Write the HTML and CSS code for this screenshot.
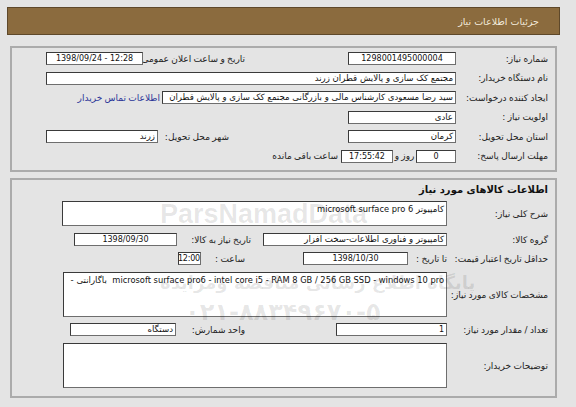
FILE: index.html
```html
<!DOCTYPE html>
<html lang="fa" dir="rtl">
<head>
<meta charset="utf-8">
<link rel="stylesheet" href="styles.css">
</head>
<body>
<div class="page">
  <div class="header">جزئیات اطلاعات نیاز</div>

  <div class="panel p1">
    <div class="row">
      <div class="lbl">شماره نیاز:</div>
      <div class="box c w108">1298001495000004</div>
      <div class="lbl2 r1">تاریخ و ساعت اعلان عمومی:</div>
      <div class="box c w97" dir="ltr">1398/09/24 - 12:28</div>
    </div>
    <div class="row">
      <div class="lbl">نام دستگاه خریدار:</div>
      <div class="box fa w410">مجتمع کک سازی و پالایش قطران زرند</div>
    </div>
    <div class="row">
      <div class="lbl">ایجاد کننده درخواست:</div>
      <div class="box fa w294">سید رضا مسعودی کارشناس مالی و بازرگانی مجتمع کک سازی و پالایش قطران</div>
      <a class="link">اطلاعات تماس خریدار</a>
    </div>
    <div class="row">
      <div class="lbl">اولویت نیاز :</div>
      <div class="box fa w108">عادی</div>
    </div>
    <div class="row">
      <div class="lbl">استان محل تحویل:</div>
      <div class="box fa w108">کرمان</div>
      <div class="lbl2 r5">شهر محل تحویل:</div>
      <div class="box fa w112">زرند</div>
    </div>
    <div class="row">
      <div class="lbl">مهلت ارسال پاسخ:</div>
      <div class="box c w40">0</div>
      <div class="txt day">روز و</div>
      <div class="box c w52">17:55:42</div>
      <div class="txt rem">ساعت باقی مانده</div>
    </div>
  </div>

  <div class="panel p2">
    <div class="title">اطلاعات کالاهای مورد نیاز</div>
    <div class="row2 desc">
      <div class="lbl wide">شرح کلی نیاز:</div>
      <div class="box fa tall w385">کامپیوتر <span class="en">microsoft surface pro 6</span></div>
    </div>
    <div class="row2 grp">
      <div class="lbl wide">گروه کالا:</div>
      <div class="box fa w184">کامپیوتر و فناوری اطلاعات-سخت افزار</div>
      <div class="lbl2 g2">تاریخ نیاز به کالا:</div>
      <div class="box c w103">1398/09/30</div>
    </div>
    <div class="row2 valid">
      <div class="lbl wide">حداقل تاریخ اعتبار قیمت:</div>
      <div class="lbl2 until">تا تاریخ :</div>
      <div class="box c w105">1398/10/30</div>
      <div class="lbl2 hour">ساعت :</div>
      <div class="box c w23">12:00</div>
    </div>
    <div class="row2 spec">
      <div class="lbl wide">مشخصات کالای مورد نیاز:</div>
      <div class="box fa area w384"><span class="en">microsoft surface pro6 - intel core i5 - RAM 8 GB / 256 GB SSD - windows 10 pro</span>&nbsp; باگارانتی -</div>
    </div>
    <div class="row2 qty">
      <div class="lbl wide">تعداد / مقدار مورد نیاز:</div>
      <div class="box w111">1</div>
      <div class="lbl2 unit">واحد شمارش:</div>
      <div class="box fa w106">دستگاه</div>
    </div>
    <div class="row2 note">
      <div class="lbl wide">توضیحات خریدار:</div>
      <div class="box area w384"></div>
    </div>
  </div>
</div>

<div class="wm wm-en">ParsNamadData</div>
<div class="wm wm-fa">پایگاه اطلاع رسانی مناقصه ومزایده</div>
<div class="wm wm-tel">۰۲۱-۸۸۳۴۹۶۷۰-۵</div>
</body>
</html>
```

FILE: styles.css
```css
* { box-sizing: border-box; }

body {
  margin: 0;
  background: #e4e4e4;
  font-family: "DejaVu Sans", sans-serif;
  font-size: 9px;
  word-spacing: -0.5px;
  color: #222;
  direction: rtl;
}

.page {
  width: 553px;
  margin: 7px 16px 0 7px;
}

.header {
  height: 28px;
  background: #8b6b3e;
  border: 1px solid #5e482a;
  color: #f2eadb;
  display: flex;
  align-items: center;
  padding-right: 20px;
  font-size: 9.5px;
  word-spacing: 0;
}

.panel {
  margin: 0 3px;
  border: 2px solid #ababab;
  padding-right: 7px;
}

.p1 {
  margin-top: 11px;
  height: 126px;
  padding-top: 1px;
}

.p2 {
  margin-top: 6px;
  height: 220px;
}

.row {
  display: flex;
  align-items: center;
  height: 19.5px;
}

.row2 {
  display: flex;
  align-items: center;
}

.lbl {
  width: 92px;
  flex: none;
  white-space: nowrap;
}

.lbl.wide { width: 101px; }

.lbl2 {
  flex: none;
  white-space: nowrap;
}

.r1 { margin-right: 103px; width: 102px; }
.r5 { margin-right: 119px; width: 71px; }

.box {
  flex: none;
  height: 13px;
  line-height: 11px;
  background: #fff;
  border: 1px solid #6e6e6e;
  border-top-color: #3a3a3a;
  border-left-color: #3a3a3a;
  padding: 0 2px;
  white-space: nowrap;
  overflow: hidden;
  text-align: right;
  color: #111;
  font-size: 8px;
  word-spacing: 0;
}

.box.fa { font-size: 8.6px; }

.en { font-size: 8.3px; }

.box.c { text-align: center; }

.w23 { width: 23px; padding: 0; letter-spacing: -0.2px; }
.w40 { width: 40px; }
.w52 { width: 52px; }
.w97 { width: 97px; }
.w103 { width: 103px; }
.w105 { width: 105px; }
.w106 { width: 106px; }
.w108 { width: 108px; }
.w111 { width: 111px; }
.w112 { width: 112px; }
.w184 { width: 184px; }
.w294 { width: 294px; }
.w384 { width: 384px; }
.w385 { width: 385px; }
.w410 { width: 410px; }

.box.tall {
  height: 25px;
  padding-top: 1px;
  line-height: 12px;
}

.box.area {
  height: 45px;
  padding: 1px 2px 0;
  line-height: 12px;
}

.link {
  color: #2b3598;
  margin-right: 2px;
  white-space: nowrap;
}

.txt { white-space: nowrap; }
.day { width: 23px; text-align: center; }
.rem { margin-right: 3px; }

.title {
  height: 20px;
  line-height: 20px;
  font-weight: bold;
  font-size: 10px;
  word-spacing: 0;
  color: #111;
}

.desc { margin-top: 1px; height: 25px; }
.grp { margin-top: 7px; height: 13px; }
.g2 { margin-right: 12px; width: 74px; }
.valid { margin-top: 6px; height: 13px; }
.until { width: 39px; }
.hour { margin-right: 58px; width: 44px; }
.spec { margin-top: 7px; height: 45px; }
.qty { margin-top: 6px; height: 13px; }
.unit { margin-right: 91px; width: 69px; }
.note { margin-top: 7px; height: 45px; }

.wm {
  position: absolute;
  color: rgba(0, 0, 0, 0.1);
  font-weight: bold;
  white-space: nowrap;
  word-spacing: 0;
  pointer-events: none;
}

.wm-en {
  left: 160px;
  top: 199px;
  font-family: "Liberation Sans", sans-serif;
  font-size: 27px;
}

.wm-fa {
  left: 160px;
  top: 272px;
  font-size: 18px;
}

.wm-tel {
  left: 185px;
  top: 298px;
  font-size: 24px;
}
```
